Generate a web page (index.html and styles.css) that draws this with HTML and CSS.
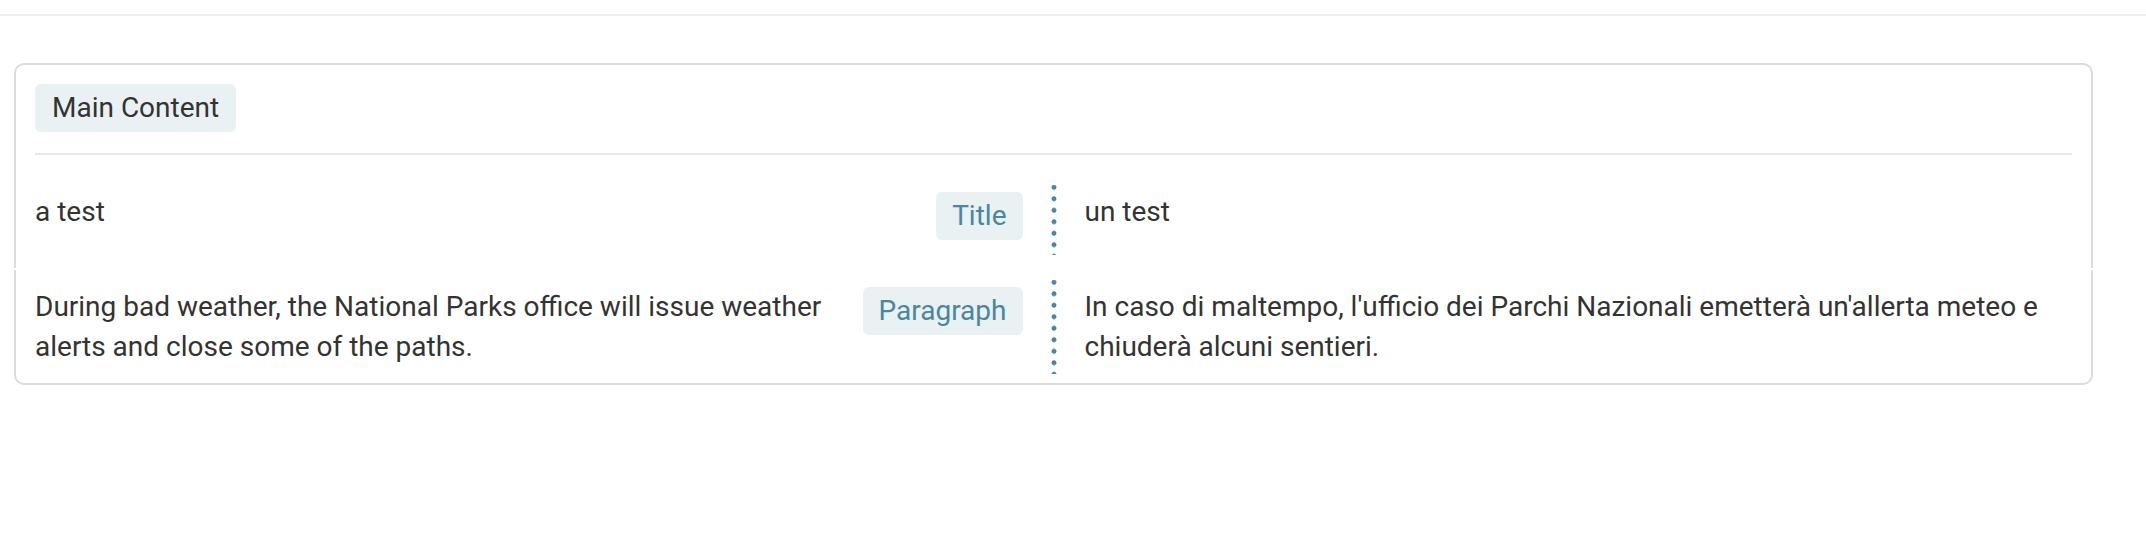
FILE: index.html
```html
<!DOCTYPE html>
<html lang="en">
<head>
    <meta charset="UTF-8">
    <meta name="viewport" content="width=device-width, initial-scale=1.0">
    <title>Translation Segments</title>
    <link rel="stylesheet" href="styles.css">
</head>
<body>

    <div class="topbar"></div>

    <div class="page">
        <!-- Section header + first segment -->
        <div class="panel panel-top">
            <div class="panel-header">
                <span class="tag">Main Content</span>
            </div>

            <div class="segment segment-first">
                <div class="source">
                    <div class="text">a test</div>
                    <span class="tag tag-type">Title</span>
                </div>
                <div class="divider"></div>
                <div class="target">un test</div>
            </div>
        </div>

        <!-- Second segment -->
        <div class="panel panel-bottom">
            <div class="segment">
                <div class="source">
                    <div class="text">During bad weather, the National Parks office will issue weather alerts and close some of the paths.</div>
                    <span class="tag tag-type">Paragraph</span>
                </div>
                <div class="divider"></div>
                <div class="target">In caso di maltempo, l'ufficio dei Parchi Nazionali emetterà un'allerta meteo e chiuderà alcuni sentieri.</div>
            </div>
        </div>
    </div>

</body>
</html>
```

FILE: styles.css
```css
* {
    margin: 0;
    padding: 0;
    box-sizing: border-box;
}

body {
    font-family: 'Roboto', 'Liberation Sans', sans-serif;
    font-size: 28px;
    line-height: 40px;
    color: #333;
    background-color: white;
}

.topbar {
    height: 16px;
    border-bottom: 2px solid #eceff1;
}

.page {
    padding: 47px 53px 0 14px;
}

.panel {
    border: 2px solid #dcdcdc;
    padding: 0 19px;
}

.panel-top {
    border-bottom: none;
    border-radius: 10px 10px 0 0;
    padding-top: 19px;
}

.panel-bottom {
    border-top: none;
    border-radius: 0 0 10px 10px;
    margin-top: 2px;
}

.panel-header {
    padding-bottom: 21px;
    border-bottom: 2px solid #e6e6e6;
    margin-bottom: 17px;
}

.tag {
    display: inline-block;
    padding: 4px 17px;
    background-color: #e9f1f3;
    border-radius: 6px;
    color: #333;
}

.tag-type {
    color: #4a86a0;
    flex-shrink: 0;
    padding: 4px 16px;
}

.segment {
    display: grid;
    grid-template-columns: 1fr 6px 1fr;
    column-gap: 28px;
    padding: 17px 0 16px;
}

.segment-first {
    padding: 20px 0;
    min-height: 96px;
}

.source {
    display: flex;
    justify-content: space-between;
    align-items: flex-start;
    gap: 24px;
}

.divider {
    margin: -7px 0;
    background-image: radial-gradient(circle, #4a86a0 2.2px, transparent 2.8px);
    background-size: 6px 11.5px;
    background-position: 0 -3.5px;
    background-repeat: repeat-y;
}
```
